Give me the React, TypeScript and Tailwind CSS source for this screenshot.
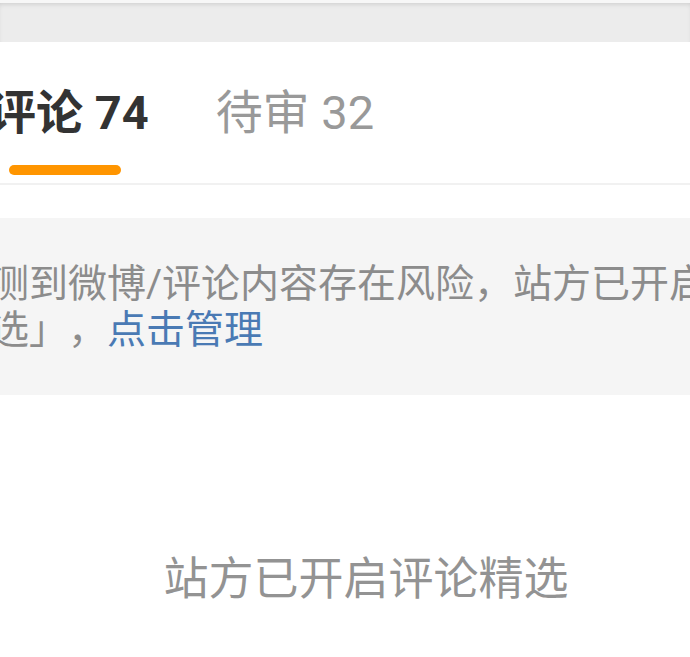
import React from 'react'

const font = { fontFamily: 'Roboto, "Noto Sans CJK SC", sans-serif' }

export default function App() {
  return (
    <div
      className="w-[690px] h-[657px] overflow-hidden bg-white [text-spacing-trim:space-all]"
      style={font}
    >
      {/* top strip */}
      <div className="h-[42px] bg-[#ececec] border-t-[3px] border-[#f7f7f7] shadow-[inset_0_3px_5px_-2px_rgba(0,0,0,0.14)]" />

      {/* tabs */}
      <div className="h-[143px] border-b-2 border-[#f1f1f1]">
        <div className="flex gap-[67px] ml-[-11px] pt-[47px]">
          <div className="flex flex-col">
            <span className="text-[47px] leading-[47px] font-bold text-[#333333] whitespace-nowrap">
              评论 74
            </span>
            <span className="mt-[29px] ml-[20px] h-[10px] w-[112px] rounded-full bg-[#ff9500]" />
          </div>
          <div className="flex flex-col">
            <span className="text-[47px] leading-[47px] text-[#999999] whitespace-nowrap">
              待审 32
            </span>
          </div>
        </div>
      </div>

      {/* notice */}
      <div className="mt-[33px] h-[177px] bg-[#f5f5f5] pt-[43px]">
        <p className="ml-[-49px] text-[39px] leading-[46px] text-[#8c8c8c] whitespace-nowrap">
          检测到微博/评论内容存在风险，站方已开启「评论
          <br />
          精选」，<span className="text-[#4a7ab4]">点击管理</span>
        </p>
      </div>

      {/* empty state */}
      <div className="w-[732px] flex justify-center mt-[162px]">
        <span className="text-[45px] leading-[45px] text-[#939393] whitespace-nowrap">
          站方已开启评论精选
        </span>
      </div>
    </div>
  )
}
